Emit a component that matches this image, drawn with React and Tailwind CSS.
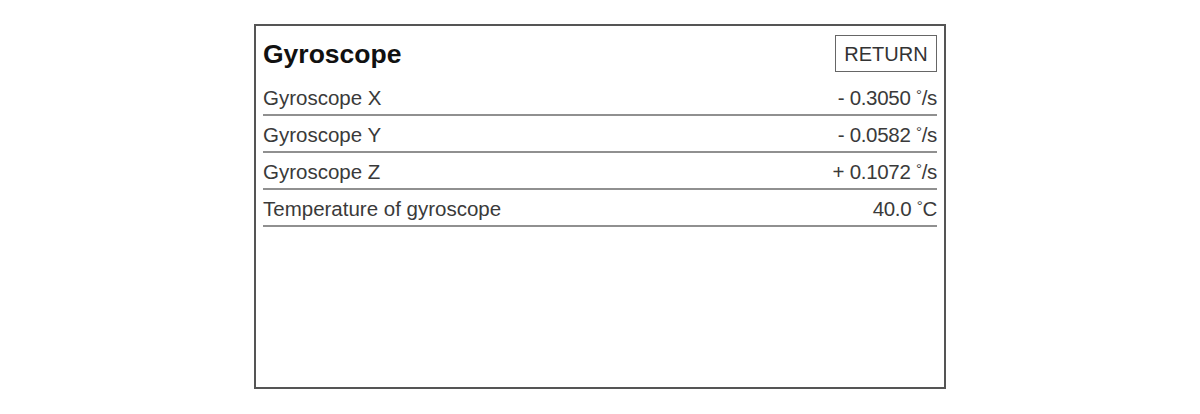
import React from "react";

const rows = [
  { label: "Gyroscope X", value: "- 0.3050", unit: "/s" },
  { label: "Gyroscope Y", value: "- 0.0582", unit: "/s" },
  { label: "Gyroscope Z", value: "+ 0.1072", unit: "/s" },
  { label: "Temperature of gyroscope", value: "40.0", unit: "C" },
];

export default function App() {
  return (
    <div className="w-[1200px] h-[414px] bg-white flex items-start justify-center pt-[24px]" style={{ fontFamily: '"Liberation Sans", Arial, sans-serif' }}>
      <div className="w-[692px] h-[365px] border-2 border-[#555] flex flex-col px-[7px]">
        <div className="h-[53px] flex items-start justify-between pt-[9px]">
          <div className="text-[26.5px] font-bold text-[#111] leading-[38px]">Gyroscope</div>
          <div className="w-[102px] h-[37px] border border-[#666] flex items-center justify-center text-[20px] text-[#333] leading-none">RETURN</div>
        </div>
        {rows.map((r) => (
          <div key={r.label} className="h-[37px] border-b-2 border-[#909090] flex items-center justify-between pt-[4px] text-[20.5px] text-[#3a3a3a] leading-none">
            <span>{r.label}</span>
            <span className="tracking-[-0.3px]">
              {r.value} <span className="text-[15px] relative top-[-5px]">°</span>{r.unit}
            </span>
          </div>
        ))}
      </div>
    </div>
  );
}
